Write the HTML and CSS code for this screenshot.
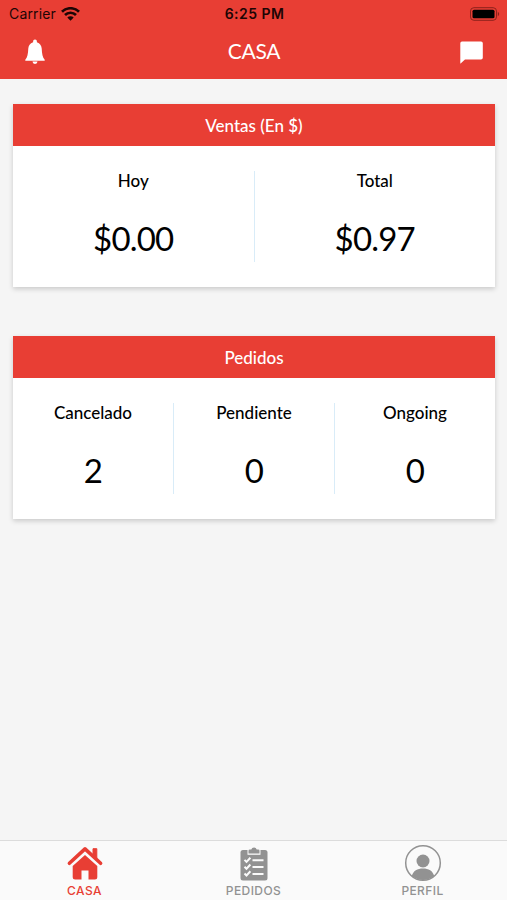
FILE: index.html
```html
<!DOCTYPE html>
<html lang="es">
	<head>
		<meta charset="UTF-8">
		<title>Casa</title>
		<link rel="stylesheet" href="styles.css">
	</head>
	<body>
		<header class="header">
			<div class="status">
				<div class="carrier">
					<span>Carrier</span>
					<svg class="wifi" width="19" height="14" viewBox="0 0 19 14">
						<path d="M1 4.800a12 12 0 0 1 17 0M4 8a7.800 7.800 0 0 1 11 0" fill="none" stroke="#1d0504" stroke-width="2.700"/>
						<path d="M9.500 13.800L6.300 10.600a4.500 4.500 0 0 1 6.400 0z" fill="#1d0504"/>
					</svg>
				</div>
				<div class="time">6:25 PM</div>
				<svg class="battery" width="31" height="14" viewBox="0 0 31 14">
					<rect x="1.500" y=".7" width="26" height="12.600" rx="3.400" fill="none" stroke="#8c221c" stroke-width="1"/>
					<rect x="3.500" y="2.700" width="22" height="8.600" rx="1.600" fill="#000"/>
					<path d="M28.800 4.700v4.600a2.600 2.600 0 0 0 0-4.600z" fill="#8c221c"/>
				</svg>
			</div>
			<div class="navbar">
				<svg width="20" height="26" viewBox="0 0 20 26">
					<path d="M10 .5a1.900 1.900 0 0 1 1.900 2v.7C15 4.100 16.500 6.600 16.700 9.600c.3 5.400.8 8.800 3 11.200v1H.3v-1c2.200-2.400 2.700-5.800 3-11.200.2-3 1.700-5.500 4.800-6.400v-.7A1.900 1.900 0 0 1 10 .5zM7.500 22.500h5a2.500 2.400 0 0 1-5 0z" fill="#fff"/>
				</svg>
				<h1>CASA</h1>
				<svg width="23" height="23" viewBox="0 0 23 23">
					<path d="M2 .4h19a1.800 1.800 0 0 1 1.800 1.800v14.600a1.800 1.800 0 0 1-1.800 1.800H5L.3 22.800V2.200A1.800 1.800 0 0 1 2 .4z" fill="#fff"/>
				</svg>
			</div>
		</header>

		<main>
			<section class="card">
				<h2>Ventas (En $)</h2>
				<div class="stats">
					<div class="stat">
						<h3>Hoy</h3>
						<p>$0.00</p>
					</div>
					<div class="stat">
						<h3>Total</h3>
						<p>$0.97</p>
					</div>
				</div>
			</section>
			<section class="card">
				<h2>Pedidos</h2>
				<div class="stats">
					<div class="stat">
						<h3>Cancelado</h3>
						<p>2</p>
					</div>
					<div class="stat">
						<h3>Pendiente</h3>
						<p>0</p>
					</div>
					<div class="stat">
						<h3>Ongoing</h3>
						<p>0</p>
					</div>
				</div>
			</section>
		</main>

		<nav class="tabs">
			<a class="tab active">
				<svg width="38" height="38" viewBox="0 0 38 38">
					<path d="M3.400 19.300L19 4.900l15.600 14.400" fill="none" stroke="currentColor" stroke-width="3.600" stroke-linecap="round" stroke-linejoin="round"/>
					<path d="M27 4.700h3.800V14L27 10.500z" fill="currentColor" stroke="currentColor" stroke-linejoin="round"/>
					<path d="M19 10.900l12.300 11.200V33a2.500 2.500 0 0 1-2.500 2.500h-6.300V26.500h-7v9H9.200A2.500 2.500 0 0 1 6.700 33V22.100z" fill="currentColor"/>
				</svg>
				<span>CASA</span>
			</a>
			<a class="tab">
				<svg width="38" height="38" viewBox="0 0 38 38">
					<rect x="5.500" y="6" width="27" height="30.500" rx="2.500" fill="currentColor"/>
					<path d="M12.500 5.500h13v5.300h-13z" fill="#fafafa"/>
					<path d="M13.500 9.600V6.800q0-1.300 1.300-1.300h1.500a2.800 2.800 0 0 1 5.400 0h1.500q1.300 0 1.300 1.300v2.800z" fill="currentColor"/>
					<path d="M9.500 15.900l2 2 3.900-4.200M9.500 22.700l2 2 3.900-4.200M9.500 29.500l2 2 3.900-4.200" fill="none" stroke="#fafafa" stroke-width="2"/>
					<path d="M17.500 16.200h11M17.500 23h11M17.500 30h11" stroke="#fafafa" stroke-width="2"/>
				</svg>
				<span>PEDIDOS</span>
			</a>
			<a class="tab">
				<svg width="38" height="38" viewBox="0 0 38 38">
					<circle cx="19" cy="19" r="17.300" fill="none" stroke="currentColor" stroke-width="1.500"/>
					<circle cx="19" cy="17" r="6.500" fill="currentColor"/>
					<path d="M7.800 32c1.300-5 5.700-7.400 11.200-7.400s9.900 2.400 11.200 7.400a17.300 17.300 0 0 1-22.400 0z" fill="currentColor"/>
				</svg>
				<span>PERFIL</span>
			</a>
		</nav>
	</body>
</html>
```
FILE: styles.css
```css
* {
	box-sizing: border-box;
}

body {
	display: flex;
	flex-direction: column;
	height: 900px;
	margin: 0;
	background-color: #f5f5f5;
	color: #000;
	font-family: Lato, sans-serif;
}

h1, h2, h3, p {
	margin: 0;
}

svg {
	display: block;
}

.header {
	height: 79px;
	background-color: #e83e34;
}

.status {
	display: grid;
	grid-template-columns: 1fr auto 1fr;
	align-items: center;
	height: 27px;
	padding: 0 7px 0 9px;
	font-family: Inter, sans-serif;
	font-size: 14px;
	color: #1d0504;
}

.carrier {
	display: flex;
	align-items: center;
	gap: 5px;
	letter-spacing: 0.15px;
}

.time {
	font-weight: 600;
	letter-spacing: 0.45px;
}

.battery {
	justify-self: end;
}

.navbar {
	display: flex;
	justify-content: space-between;
	align-items: center;
	height: 50px;
	padding: 0 24px 0 25px;
}

.navbar h1 {
	padding-left: 3px;
	font-size: 21px;
	font-weight: 400;
	line-height: 24px;
	letter-spacing: -0.3px;
	padding-bottom: 2px;
	color: #fff;
}

main {
	flex: 1;
	padding: 25px 12px 0 13px;
}

.card {
	height: 183px;
	margin-bottom: 49px;
	background-color: #fff;
	box-shadow: 0 2px 5px rgba(0, 0, 0, 0.18);
}

.card h2 {
	height: 42px;
	background-color: #e83e34;
	color: #fff;
	font-size: 17px;
	font-weight: 500;
	line-height: 43px;
	text-align: center;
}

.stats {
	display: flex;
	padding: 25px 0;
}

.stat {
	flex: 1;
	height: 91px;
	text-align: center;
}

.stat + .stat {
	border-left: 1px solid #d9ecf8;
}

.stat h3 {
	font-size: 17px;
	font-weight: 500;
	line-height: 20px;
}

.stat p {
	margin-top: 27px;
	font-size: 33px;
	line-height: 40px;
	letter-spacing: -0.8px;
}

.tabs {
	display: flex;
	height: 60px;
	border-top: 1px solid #dcdcdc;
	background-color: #fafafa;
}

.tab {
	display: flex;
	flex: 1;
	flex-direction: column;
	align-items: center;
	padding-top: 3px;
	color: #929292;
	font-family: Inter, sans-serif;
	font-size: 12px;
	font-weight: 500;
	line-height: 18px;
	letter-spacing: 0.4px;
}

.active {
	color: #e83e34;
}
```
